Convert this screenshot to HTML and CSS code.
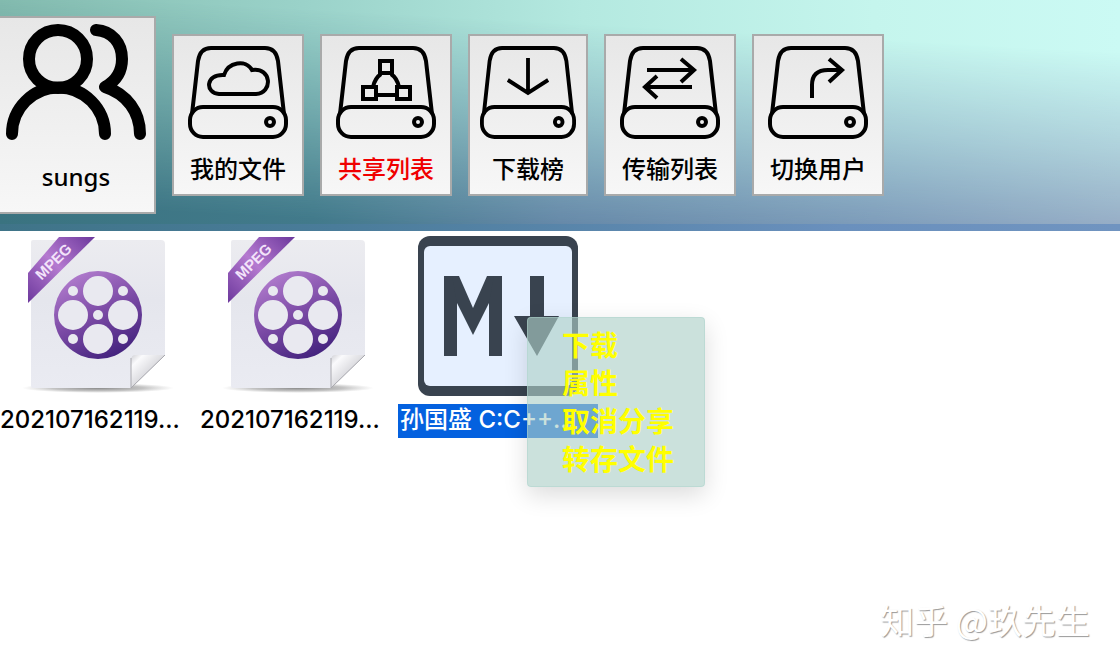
FILE: index.html
```html
<!DOCTYPE html>
<html lang="zh-CN">
<head>
<meta charset="utf-8">
<title>网盘 - 共享列表</title>
<link rel="stylesheet" href="styles.css">
</head>
<body>
<svg class="defs" aria-hidden="true">
  <defs>
    <symbol id="drive" viewBox="0 0 100 93" preserveAspectRatio="none">
      <path d="M4 68L10 15Q12 2 23 2H77Q88 2 90 15L96 68"/>
      <rect x="2" y="61" width="96" height="30" rx="13"/>
      <circle cx="82" cy="76" r="4"/>
    </symbol>
    <linearGradient id="reel" x1="0.2" y1="0" x2="0.7" y2="1">
      <stop offset="0" stop-color="#b57fd0"/><stop offset="0.5" stop-color="#7c4ba6"/><stop offset="1" stop-color="#41217c"/>
    </linearGradient>
    <linearGradient id="ribbon" x1="1" y1="0" x2="0" y2="1">
      <stop offset="0" stop-color="#6c389c"/><stop offset="0.5" stop-color="#b57ad0"/><stop offset="1" stop-color="#6c389c"/>
    </linearGradient>
    <linearGradient id="paper" x1="0" y1="0" x2="0" y2="1">
      <stop offset="0" stop-color="#ececf0"/><stop offset="0.4" stop-color="#e5e6ed"/><stop offset="1" stop-color="#eaebf2"/>
    </linearGradient>
    <linearGradient id="fold" x1="0" y1="0" x2="0.6" y2="0.6">
      <stop offset="0" stop-color="#d0d0d5"/><stop offset="0.3" stop-color="#fafafc"/><stop offset="0.8" stop-color="#dedee2"/><stop offset="1" stop-color="#b4b4ba"/>
    </linearGradient>
    <radialGradient id="ground">
      <stop offset="0" stop-color="#888"/><stop offset="0.6" stop-color="#aaa" stop-opacity="0.7"/><stop offset="1" stop-color="#bbb" stop-opacity="0"/>
    </radialGradient>
    <symbol id="mpeg" viewBox="0 0 160 160">
      <ellipse cx="80" cy="152" rx="76" ry="5" fill="url(#ground)"/>
      <path d="M15 4H143Q147 4 147 8V119L113 152H15Q13 152 13 150V6Q13 4 15 4Z" fill="url(#paper)"/>
      <path d="M147 119L113 152V124Q113 119 118 119Z" fill="url(#fold)"/>
      <path d="M147 119L113 152V122" fill="none" stroke="#a8a8ae" stroke-width="1"/>
      <path d="M10 37L41 1H77L10 67Z" fill="url(#ribbon)"/>
      <circle cx="80" cy="79" r="44" fill="url(#reel)"/>
      <g fill="#e9e9f0">
        <circle cx="80" cy="55" r="15"/><circle cx="80" cy="103" r="15"/>
        <circle cx="55" cy="79" r="15"/><circle cx="105" cy="79" r="15"/>
        <circle cx="80" cy="79" r="5"/><circle cx="55" cy="55" r="5"/><circle cx="105" cy="55" r="5"/>
        <circle cx="55" cy="103" r="5"/><circle cx="105" cy="103" r="5"/>
      </g>
      <text class="ribbon-text" x="35" y="31" text-anchor="middle" transform="rotate(-45 35 25)">MPEG</text>
    </symbol>
  </defs>
</svg>

<header class="toolbar">
  <button class="tool user" type="button">
    <svg class="user-icon" viewBox="0 0 140 116" aria-hidden="true">
      <circle cx="52" cy="35" r="29"/>
      <path d="M6 110A46 46 0 0 1 99 110"/>
      <path d="M90 6C106 7 116 19 116 35C116 47 110 57 99 63C121 70 134 88 134 110"/>
    </svg>
    <span class="user-name">sungs</span>
  </button>
  <nav class="tools">
    <button class="tool" type="button">
      <svg class="tool-icon" viewBox="0 0 100 93" aria-hidden="true">
        <use href="#drive"/>
        <path d="M31 48C17 47 17 28 36 29C40 16 58 13 64 24C84 21 85 47 68 48Z"/>
      </svg>
      <span>我的文件</span>
    </button>
    <button class="tool current" type="button">
      <svg class="tool-icon" viewBox="0 0 100 93" aria-hidden="true">
        <use href="#drive"/>
        <path d="M44 15H56V27H44ZM27 41H40V53H27ZM61 41H74V53H61ZM45 28Q39 32 37 41M55 28Q61 32 63 41M41 49H60"/>
      </svg>
      <span>共享列表</span>
    </button>
    <button class="tool compact" type="button">
      <svg class="tool-icon" viewBox="0 0 100 93" preserveAspectRatio="none" aria-hidden="true">
        <use href="#drive"/>
        <path d="M50 12V47M29 34L50 47L71 34"/>
      </svg>
      <span>下载榜</span>
    </button>
    <button class="tool" type="button">
      <svg class="tool-icon" viewBox="0 0 100 93" aria-hidden="true">
        <use href="#drive"/>
        <path d="M27 24H73M61 13L74 24L61 36M72 41H26M37 30L25 41L37 52"/>
      </svg>
      <span>传输列表</span>
    </button>
    <button class="tool" type="button">
      <svg class="tool-icon" viewBox="0 0 100 93" aria-hidden="true">
        <use href="#drive"/>
        <path d="M44 52V39Q44 24 60 24H73M61 13L74 24L61 36"/>
      </svg>
      <span>切换用户</span>
    </button>
  </nav>
</header>

<main class="content">
  <ul class="files">
    <li><button class="file" type="button">
      <svg class="file-icon" viewBox="0 0 160 160" aria-hidden="true"><use href="#mpeg"/></svg>
      <span class="file-name">202107162119...</span>
    </button></li>
    <li><button class="file" type="button">
      <svg class="file-icon" viewBox="0 0 160 160" aria-hidden="true"><use href="#mpeg"/></svg>
      <span class="file-name">202107162119...</span>
    </button></li>
    <li><button class="file selected" type="button">
      <svg class="file-icon" viewBox="0 0 160 160" aria-hidden="true">
        <rect width="160" height="160" rx="12" fill="#39434f"/>
        <rect x="6" y="10" width="148" height="140" rx="6" fill="#e6f0ff"/>
        <g fill="#39434f">
          <rect x="26" y="40" width="13" height="80"/>
          <rect x="71" y="40" width="13" height="80"/>
          <path d="M34 40H41L55 72L69 40H76L71 67L55 99L39 67Z"/>
          <path d="M112 40H126V80H141L119 120L96 80H112Z"/>
        </g>
      </svg>
      <span class="file-name">孙国盛 C:C++...</span>
    </button></li>
  </ul>
  <div class="menu" role="menu">
    <button type="button" role="menuitem">下载</button>
    <button type="button" role="menuitem">属性</button>
    <button type="button" role="menuitem">取消分享</button>
    <button type="button" role="menuitem">转存文件</button>
  </div>
</main>
<div class="watermark">知乎 @玖先生</div>
</body>
</html>
```
FILE: styles.css
```css
* { box-sizing: border-box; }

body {
  margin: 0;
  min-height: 100vh;
  position: relative;
  overflow-x: hidden;
  background: #fff;
  color: #000;
  font-family: Inter, "Noto Sans CJK SC", sans-serif;
  font-size: 24px;
}

button {
  margin: 0;
  font: inherit;
  color: inherit;
  cursor: default;
}

svg { display: block; }

.defs {
  position: absolute;
  width: 0;
  height: 0;
}

.toolbar {
  position: relative;
  isolation: isolate;
  display: flex;
  align-items: center;
  gap: 16px;
  padding: 16px 16px 17px 0;
  background: linear-gradient(90deg, #85bdb0 0%, #9ad2c9 27%, #b4e9e0 52%, #c5f5ed 78%, #cbfaf4 100%);
}

/* Darker tone that fades in towards the bottom of the bar */
.toolbar::before {
  content: "";
  position: absolute;
  inset: 0;
  z-index: -1;
  background: linear-gradient(90deg, #3a7380 0%, #427a8b 28%, #6385a6 50%, #7490b3 78%, #8b9dbc 100%);
  -webkit-mask-image: linear-gradient(183deg, transparent 18%, rgba(0, 0, 0, 0.45) 52%, #000 90%);
  mask-image: linear-gradient(183deg, transparent 18%, rgba(0, 0, 0, 0.45) 52%, #000 90%);
}

.toolbar::after {
  content: "";
  position: absolute;
  inset: auto 0 0;
  z-index: -1;
  height: 7px;
  background: linear-gradient(90deg, #3f7488, #4a7c9a 30%, #6a90bd 75%, #7094c0);
}

.tools {
  display: flex;
  gap: 16px;
}

.tool {
  display: flex;
  flex-direction: column;
  align-items: center;
  gap: 9px;
  padding: 10px 14px 6px;
  border: 2px solid #a9aaaa;
  background: linear-gradient(#e7e7e7, #f7f7f7);
  font-family: "Noto Sans CJK SC", sans-serif;
  font-weight: 500;
  line-height: 40px;
  white-space: nowrap;
}

.tool-icon {
  width: 100px;
  height: 93px;
  fill: none;
  stroke: #000;
  stroke-width: 4px;
}

.tool.current { color: #f00000; }

.tool.compact {
  padding-left: 10px;
  padding-right: 10px;
}

.compact .tool-icon { width: 96px; }

.tool.user {
  gap: 17px;
  padding: 6px 8px 15px 6px;
  border-left: 0;
  font-family: "Noto Sans", sans-serif;
}

.user-icon {
  width: 140px;
  height: 116px;
  fill: none;
  stroke: #000;
  stroke-width: 12px;
  stroke-linecap: round;
  stroke-linejoin: round;
}

.content {
  position: relative;
  padding-top: 5px;
}

.files {
  display: flex;
  flex-wrap: wrap;
  margin: 0 0 0 -2px;
  padding: 0;
  list-style: none;
}

.file {
  display: flex;
  flex-direction: column;
  align-items: center;
  gap: 8px;
  width: 200px;
  padding: 0;
  border: 0;
  background: none;
  font-weight: 500;
}

.file-icon {
  width: 160px;
  height: 160px;
}

.file-name {
  align-self: stretch;
  padding: 0 2px 2px;
  line-height: 32px;
  text-align: left;
  white-space: nowrap;
}

.selected .file-name {
  background: #0461df;
  color: #fff;
}

.ribbon-text {
  fill: #f3e3fa;
  font: bold 15px "Liberation Sans", sans-serif;
}

.menu {
  position: absolute;
  left: 527px;
  top: 86px;
  display: flex;
  flex-direction: column;
  padding: 7px 30px 9px 34px;
  border: 1px solid rgba(173, 212, 204, 0.5);
  border-radius: 4px;
  background: rgba(173, 208, 200, 0.63);
  box-shadow: 0 8px 24px rgba(0, 0, 0, 0.14);
}

.menu button {
  padding: 0;
  border: 0;
  background: none;
  color: #ff0;
  font-family: "Noto Sans CJK SC", sans-serif;
  font-size: 28px;
  font-weight: 700;
  line-height: 38px;
  text-align: left;
}

.watermark {
  position: absolute;
  right: 30px;
  bottom: 24px;
  color: #fff;
  font-family: "Noto Sans CJK SC", sans-serif;
  font-size: 34px;
  line-height: 48px;
  text-shadow: 1px 1px 1px #999;
}
```
